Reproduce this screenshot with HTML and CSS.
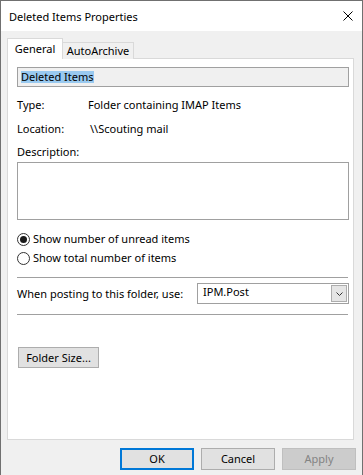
FILE: index.html
```html
<!DOCTYPE html>
<html>
<head>
<meta charset="utf-8">
<link rel="stylesheet" href="styles.css">
</head>
<body>
<div class="window">
  <div class="titlebar">
    <span class="title">Deleted Items Properties</span>
    <svg class="close" width="10" height="10" viewBox="0 0 10 10"><path d="M0.5 0.5 L9.5 9.5 M9.5 0.5 L0.5 9.5" stroke="#000" stroke-width="1" fill="none"/></svg>
  </div>
  <div class="client">
    <div class="tabs">
      <div class="tab active">General</div>
      <div class="tab">AutoArchive</div>
    </div>
    <div class="panel">
      <div class="namebox"><span class="sel">Deleted Items</span></div>
      <div class="row r-type"><span class="lbl">Type:</span><span class="val">Folder containing IMAP Items</span></div>
      <div class="row r-loc"><span class="lbl">Location:</span><span class="val val-loc">\\Scouting mail</span></div>
      <div class="row r-desc">Description:</div>
      <div class="textarea"></div>
      <div class="radio r1"><span class="circle checked"></span><span>Show number of unread items</span></div>
      <div class="radio r2"><span class="circle"></span><span>Show total number of items</span></div>
      <div class="sep s1"></div>
      <div class="posting">
        <span>When posting to this folder, use:</span>
        <div class="combo"><span class="combo-text">IPM.Post</span><span class="drop"><svg width="7" height="4" viewBox="0 0 7 4"><path d="M0.5 0.5 L3.5 3.5 L6.5 0.5" stroke="#333" stroke-width="1" fill="none"/></svg></span></div>
      </div>
      <div class="sep s2"></div>
      <div class="btn folder">Folder Size...</div>
    </div>
    <div class="buttons">
      <div class="btn dlg ok">OK</div>
      <div class="btn dlg">Cancel</div>
      <div class="btn dlg disabled">Apply</div>
    </div>
  </div>
</div>
</body>
</html>
```

FILE: styles.css
```css
* { box-sizing: border-box; }
html, body { margin: 0; padding: 0; }
body {
  font-family: "Noto Sans", "Open Sans", sans-serif;
  font-size: 11px;
  color: #000;
  background: #f0f0f0;
}
.window {
  width: 363px;
  height: 475px;
  border: 1px solid #707070;
  border-bottom: none;
  display: flex;
  flex-direction: column;
  background: #f0f0f0;
  overflow: hidden;
}
.titlebar {
  height: 30px;
  background: #fff;
  display: flex;
  align-items: center;
  padding-left: 8px;
  padding-right: 9px;
  flex-shrink: 0;
}
.title {
  font-size: 11px;
  line-height: 16px;
  margin-top: 1px;
}
.close { margin-left: auto; margin-top: 0px; }
.client {
  flex: 1;
  display: flex;
  flex-direction: column;
  padding: 7px 8px 0 6px;
}
.tabs {
  display: flex;
  align-items: flex-end;
  height: 21px;
  position: relative;
  z-index: 1;
  margin-bottom: -1px;
}
.tab {
  height: 17px;
  border: 1px solid #d9d9d9;
  border-bottom: none;
  border-left: none;
  background: #f0f0f0;
  width: 71px;
  text-align: center;
  line-height: 16px;
}
.tab.active {
  height: 21px;
  width: 56px;
  border-left: 1px solid #d9d9d9;
  background: #fff;
  line-height: 20px;
}
.panel {
  height: 382px;
  border: 1px solid #d9d9d9;
  background: #fff;
  padding: 0 4px 0 9px;
  display: flex;
  flex-direction: column;
}
.namebox {
  margin-top: 8px;
  height: 20px;
  border: 1px solid #a0a0a0;
  background: #f0f0f0;
  padding-left: 3px;
  display: flex;
  align-items: center;
}
.sel {
  background: #99c9ef;
  line-height: 12px;
  height: 12px;
}
.row { height: 16px; line-height: 16px; display: flex; }
.lbl { width: 71px; }
.val-loc { margin-left: 2px; }
.r-type { margin-top: 10px; }
.r-loc { margin-top: 8px; }
.r-desc { margin-top: 7px; }
.textarea {
  margin-top: 2px;
  height: 58px;
  border: 1px solid #a0a0a0;
  background: #fff;
}
.radio {
  height: 16px;
  line-height: 16px;
  display: flex;
  align-items: center;
}
.r1 { margin-top: 11px; }
.r2 { margin-top: 3px; }
.circle {
  width: 13px;
  height: 13px;
  border: 1px solid #333;
  border-radius: 50%;
  margin-right: 3px;
  display: flex;
  align-items: center;
  justify-content: center;
  background: #fff;
}
.circle.checked::after {
  content: "";
  width: 7px;
  height: 7px;
  border-radius: 50%;
  background: #1a1a1a;
}
.sep {
  height: 1px;
  background: #a0a0a0;
  margin-right: 1px;
}
.s1 { margin-top: 11px; }
.s2 { margin-top: 10px; }
.posting {
  margin-top: 5px;
  height: 21px;
  display: flex;
  align-items: center;
  line-height: 16px;
}
.combo {
  margin-left: auto;
  width: 152px;
  height: 21px;
  border: 1px solid #a0a0a0;
  background: #fff;
  display: flex;
  align-items: center;
  padding: 1px;
}
.combo-text { padding-left: 4px; flex: 1; line-height: 16px; margin-top: -3px; }
.drop {
  width: 16px;
  height: 17px;
  border: 1px solid #adadad;
  background: #e5e5e5;
  display: flex;
  align-items: center;
  justify-content: center;
}
.btn {
  height: 21px;
  border: 1px solid #adadad;
  background: #e1e1e1;
  display: flex;
  align-items: center;
  justify-content: center;
  line-height: 16px;
}
.folder {
  margin-top: 32px;
  margin-left: 1px;
  width: 81px;
}
.buttons {
  margin-top: 8px;
  display: flex;
  justify-content: flex-end;
  gap: 7px;
  margin-right: -2px;
}
.dlg { width: 74px; height: 22px; }
.ok { border: 2px solid #0078d7; }
.disabled { background: #cccccc; border-color: #bfbfbf; color: #838383; }
```
